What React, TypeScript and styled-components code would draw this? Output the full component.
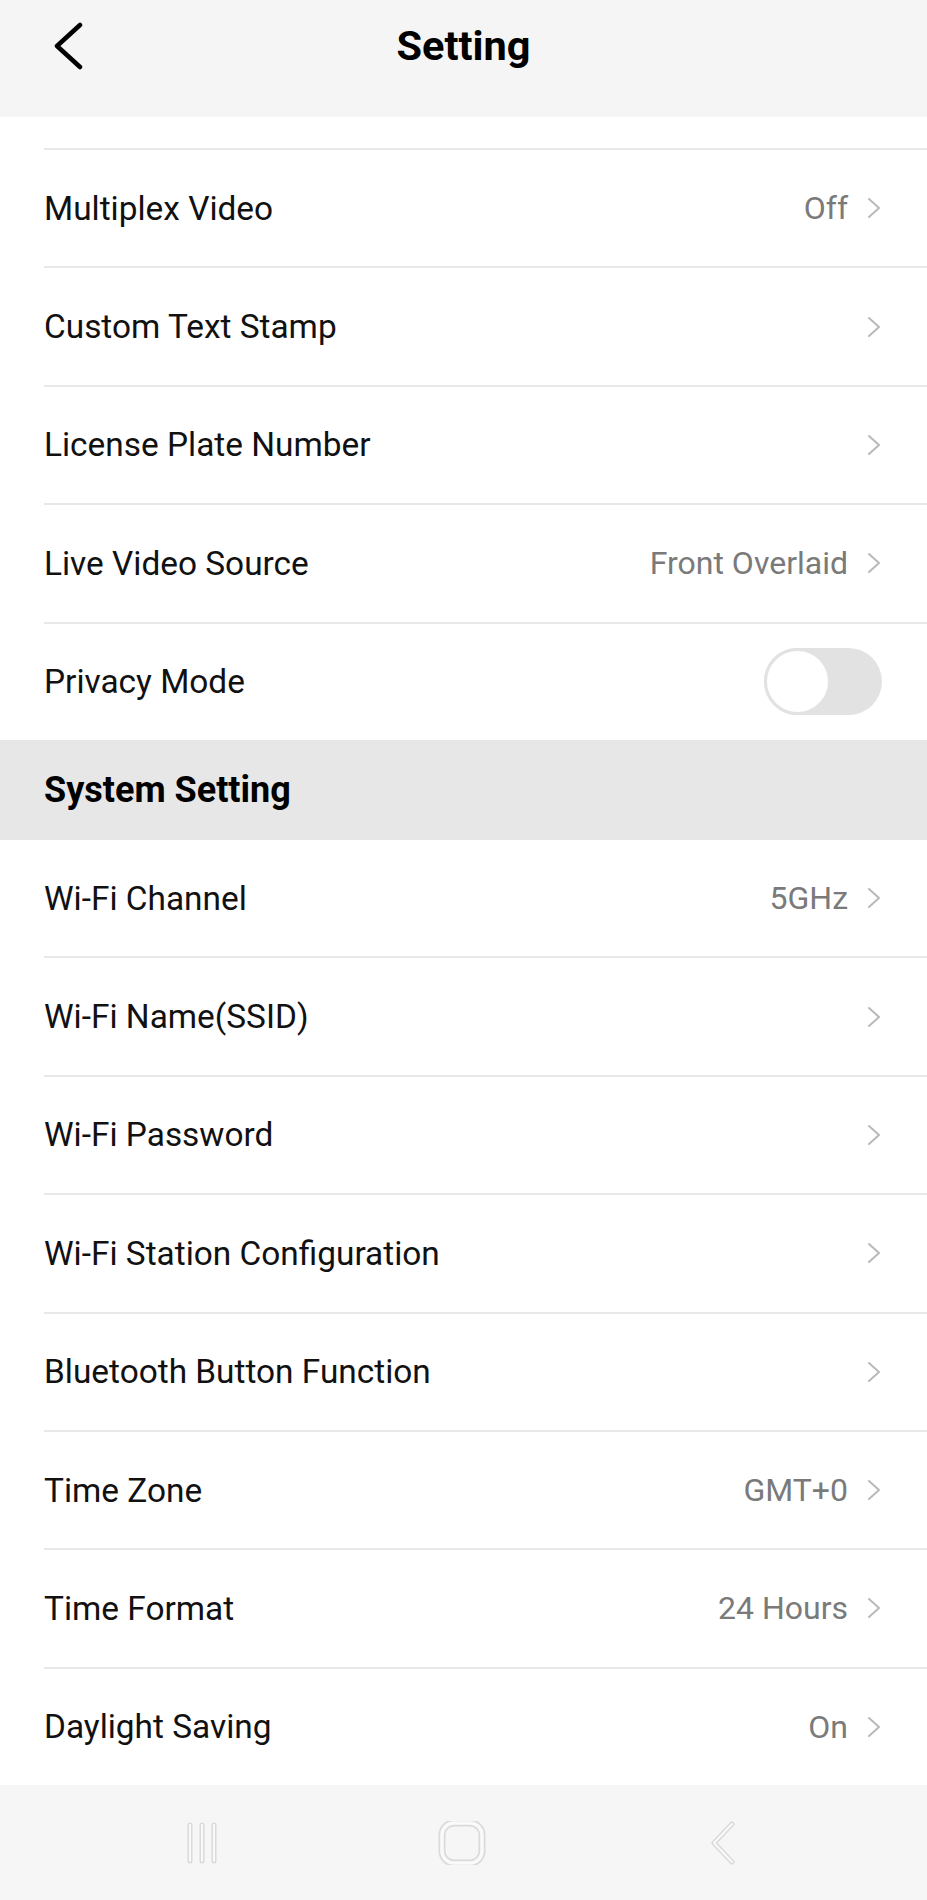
import React from "react";
import styled, { createGlobalStyle } from "styled-components";

const GlobalStyle = createGlobalStyle`
  html, body {
    margin: 0;
    padding: 0;
    background: #ffffff;
  }
  body {
    font-family: Roboto, "Noto Sans", "Liberation Sans", sans-serif;
    -webkit-font-smoothing: antialiased;
  }
`;

const Page = styled.div`
  width: 927px;
  min-height: 1900px;
  display: flex;
  flex-direction: column;
  background: #ffffff;
`;

const Header = styled.header`
  height: 117px;
  background: #f5f5f5;
  display: grid;
  grid-template-columns: 1fr auto 1fr;
  grid-template-rows: 92px;
  align-items: center;
`;

const BackButton = styled.button`
  justify-self: start;
  margin-left: 50px;
  width: 36px;
  height: 50px;
  padding: 0;
  border: none;
  background: transparent;
  display: flex;
  align-items: center;
  justify-content: center;
`;

const Title = styled.h1`
  margin: 0;
  font-size: 41.5px;
  font-weight: 700;
  color: #000;
  line-height: 1;
`;

const List = styled.div`
  display: flex;
  flex-direction: column;
  flex: 1;
`;

const Cut = styled.div`
  height: 31px;
`;

const Row = styled.div<{ $first?: boolean }>`
  box-sizing: border-box;
  height: ${({ $first }) => ($first ? "116.4px" : "118.4px")};
  margin-left: 44px;
  padding-right: 46px;
  border-top: ${({ $first }) => ($first ? "none" : "2px solid #e8e8e8")};
  display: flex;
  align-items: center;
`;

const Label = styled.span`
  flex: 1;
  font-size: 33.4px;
  color: #111;
`;

const Value = styled.span`
  font-size: 32px;
  color: #7a7a7a;
  margin-right: 19px;
`;

const Section = styled.div`
  height: 100px;
  background: #e7e7e7;
  display: flex;
  align-items: center;
  padding-left: 44px;
  font-size: 36px;
  font-weight: 700;
  color: #000;
`;

const Track = styled.div<{ $on?: boolean }>`
  box-sizing: border-box;
  width: 118px;
  height: 67px;
  margin-right: -1px;
  border-radius: 34px;
  background: ${({ $on }) => ($on ? "#4cd964" : "#e2e2e2")};
  display: flex;
  justify-content: ${({ $on }) => ($on ? "flex-end" : "flex-start")};
`;

const Knob = styled.div`
  box-sizing: border-box;
  width: 67px;
  height: 67px;
  border-radius: 50%;
  background: #fff;
  border: 3px solid #e2e2e2;
`;

const NavBar = styled.nav`
  height: 115px;
  background: #f6f6f6;
  display: flex;
  align-items: center;
  justify-content: center;
  gap: 210px;
  padding-right: 4px;
`;

const NavSlot = styled.div`
  width: 50px;
  height: 44px;
  display: flex;
  align-items: center;
  justify-content: center;
`;

function Chevron() {
  return (
    <svg width="14" height="22" viewBox="0 0 14 22">
      <path d="M2 2 L12 11 L2 20" fill="none" stroke="#b9b9b9" strokeWidth="2" strokeLinecap="round" strokeLinejoin="round" />
    </svg>
  );
}

function BackIcon() {
  return (
    <svg width="30" height="48" viewBox="0 0 30 48">
      <path d="M27 3 L4 24 L27 45" fill="none" stroke="#000" strokeWidth="4.5" strokeLinecap="round" strokeLinejoin="round" />
    </svg>
  );
}

interface ItemProps {
  label: string;
  value?: string;
  first?: boolean;
}

function Item({ label, value, first }: ItemProps) {
  return (
    <Row $first={first}>
      <Label>{label}</Label>
      {value && <Value>{value}</Value>}
      <Chevron />
    </Row>
  );
}

function Outlined({ d, rect }: { d?: string; rect?: boolean }) {
  // light outline with white fill, as the faint android nav glyphs
  return (
    <svg width="50" height="44" viewBox="0 0 50 44">
      {rect ? (
        <>
          <rect x="5" y="2" width="40" height="40" rx="12" fill="none" stroke="#dadada" strokeWidth="7" />
          <rect x="5" y="2" width="40" height="40" rx="12" fill="none" stroke="#fafafa" strokeWidth="3.5" />
        </>
      ) : (
        <>
          <path d={d} fill="none" stroke="#dadada" strokeWidth="5" strokeLinecap="round" strokeLinejoin="round" />
          <path d={d} fill="none" stroke="#fafafa" strokeWidth="2" strokeLinecap="round" strokeLinejoin="round" />
        </>
      )}
    </svg>
  );
}

const upper = [
  { label: "Multiplex Video", value: "Off" },
  { label: "Custom Text Stamp" },
  { label: "License Plate Number" },
  { label: "Live Video Source", value: "Front Overlaid" },
];

const system = [
  { label: "Wi-Fi Channel", value: "5GHz" },
  { label: "Wi-Fi Name(SSID)" },
  { label: "Wi-Fi Password" },
  { label: "Wi-Fi Station Configuration" },
  { label: "Bluetooth Button Function" },
  { label: "Time Zone", value: "GMT+0" },
  { label: "Time Format", value: "24 Hours" },
  { label: "Daylight Saving", value: "On" },
];

export default function App() {
  return (
    <Page>
      <GlobalStyle />
      <Header>
        <BackButton aria-label="Back">
          <BackIcon />
        </BackButton>
        <Title>Setting</Title>
        <div />
      </Header>
      <List>
        <Cut />
        {upper.map((it) => (
          <Item key={it.label} label={it.label} value={it.value} />
        ))}
        <Row>
          <Label>Privacy Mode</Label>
          <Track>
            <Knob />
          </Track>
        </Row>
        <Section>System Setting</Section>
        {system.map((it, i) => (
          <Item key={it.label} label={it.label} value={it.value} first={i === 0} />
        ))}
      </List>
      <NavBar>
        <NavSlot>
          <Outlined d="M13 4 L13 40 M25 4 L25 40 M37 4 L37 40" />
        </NavSlot>
        <NavSlot>
          <Outlined rect />
        </NavSlot>
        <NavSlot>
          <Outlined d="M35 3 L17 22 L35 41" />
        </NavSlot>
      </NavBar>
    </Page>
  );
}
